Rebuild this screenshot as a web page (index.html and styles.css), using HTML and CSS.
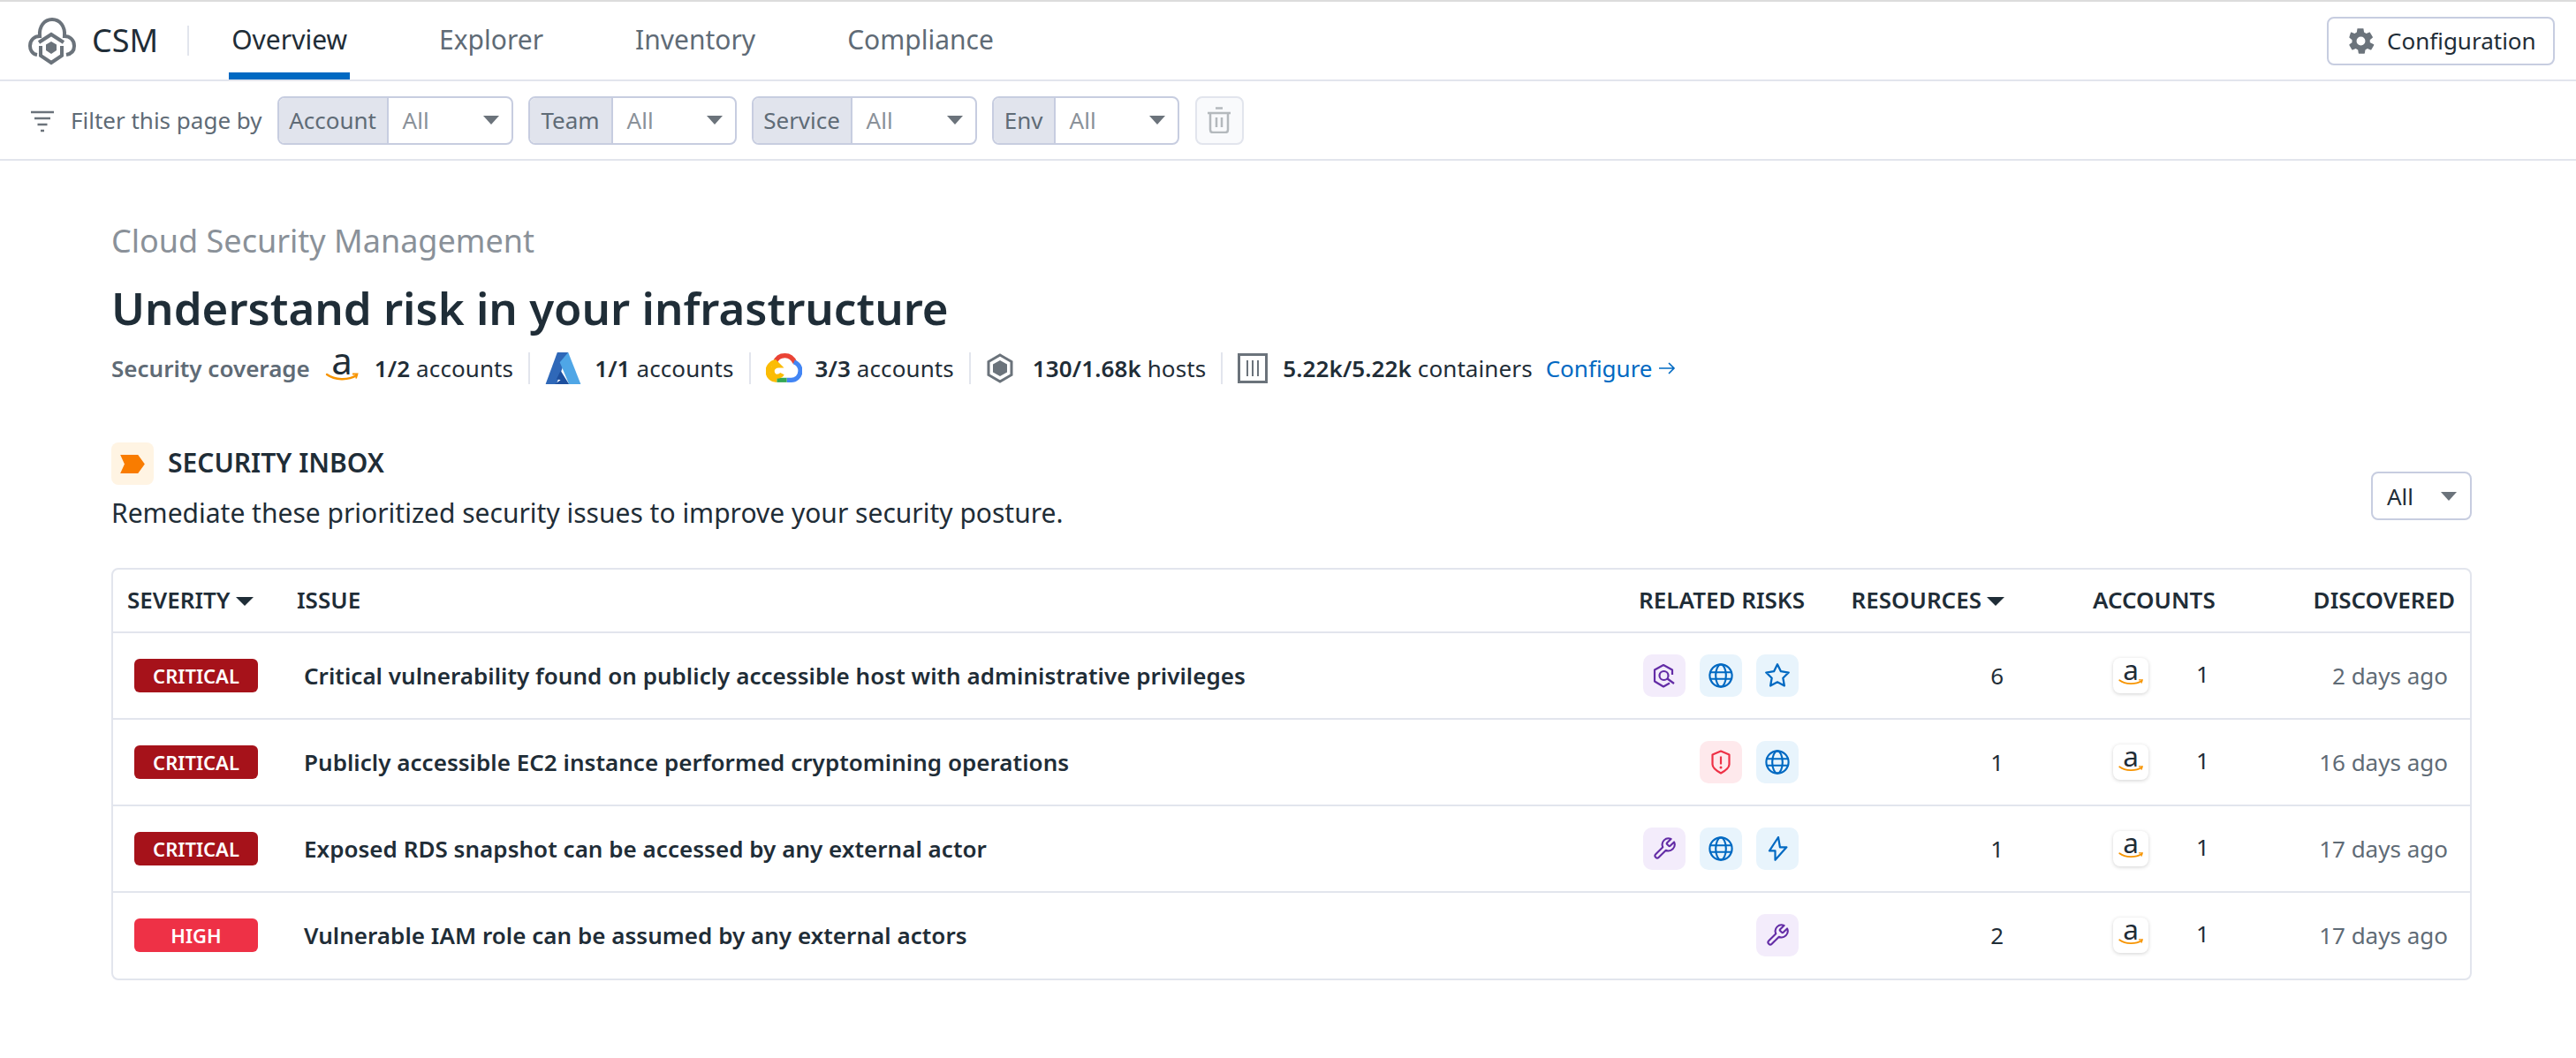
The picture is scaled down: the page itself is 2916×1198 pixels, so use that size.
FILE: index.html
```html
<!DOCTYPE html>
<html lang="en">
<head>
    <meta charset="UTF-8">
    <meta name="viewport" content="width=device-width, initial-scale=1.0">
    <title>CSM Overview</title>
    <link rel="stylesheet" href="styles.css">
</head>
<body>
    <svg class="defs" width="0" height="0">
        <symbol id="i-globe" viewBox="0 0 26 26">
            <circle cx="13" cy="13" r="11.700" fill="none" stroke="currentColor" stroke-width="2"/>
            <ellipse cx="13" cy="13" rx="5.400" ry="11.700" fill="none" stroke="currentColor" stroke-width="2"/>
            <path d="M1.500 9.500h23M1.500 16.500h23" fill="none" stroke="currentColor" stroke-width="2"/>
        </symbol>
        <symbol id="i-star" viewBox="1 1 22 22">
            <path d="M12 2l3.090 6.260L22 9.270l-5 4.870 1.180 6.880L12 17.770l-6.180 3.250L7 14.140 2 9.270l6.910-1.010z" fill="none" stroke="currentColor" stroke-width="1.800" stroke-linejoin="round"/>
        </symbol>
        <symbol id="i-bolt" viewBox="0 0 28 28">
            <path d="M15 1L5 16.300h6.500v10.500L24.400 12.300h-7.500z" fill="none" stroke="currentColor" stroke-width="2.200" stroke-linejoin="round"/>
        </symbol>
        <symbol id="i-wrench" viewBox="0 0 24 24">
            <path d="M14.700 6.300a1 1 0 0 0 0 1.400l1.600 1.600a1 1 0 0 0 1.400 0l3.770-3.770a6 6 0 0 1-7.940 7.940l-6.910 6.910a2.120 2.120 0 0 1-3-3l6.910-6.910a6 6 0 0 1 7.940-7.940l-3.760 3.760z" fill="none" stroke="currentColor" stroke-width="1.800" stroke-linejoin="round"/>
        </symbol>
        <symbol id="i-shield-search" viewBox="0 0 28 28">
            <path d="M20 22.500l-7 4-10-6V7.500l10-5.500 10 5.500v5.500" fill="none" stroke="currentColor" stroke-width="2.200" stroke-linejoin="round"/>
            <circle cx="13.500" cy="14" r="5" fill="none" stroke="currentColor" stroke-width="2.200"/>
            <path d="M17.500 17.500l7.500 5.500" fill="none" stroke="currentColor" stroke-width="2.200"/>
        </symbol>
        <symbol id="i-shield-alert" viewBox="0 0 28 28">
            <path d="M14 1.500l9.500 4v11c0 3.500-5 7.500-9.500 10-4.500-2.500-9.500-6.500-9.500-10v-11z" fill="none" stroke="currentColor" stroke-width="2.200" stroke-linejoin="round"/>
            <path d="M14 7.500v9" fill="none" stroke="currentColor" stroke-width="2.200"/>
            <circle cx="14" cy="20" r="1.500" fill="currentColor"/>
        </symbol>
        <symbol id="i-amazon" viewBox="0 0 40 32">
            <text x="20" y="23" text-anchor="middle" class="amazon-a">a</text>
            <path d="M3 23c9 6.500 24 7 33.500 1" fill="none" stroke="#f79400" stroke-width="2.400" stroke-linecap="round"/>
            <path d="M32 22.500l5.500 0-1.500 5" fill="none" stroke="#f79400" stroke-width="1.800"/>
        </symbol>
    </svg>

    <nav class="topnav">
        <svg class="logo" viewBox="0 0 56 54">
            <path d="M10 42C4 41 2 36 2 32 2 25 7 21 13 21 12 10 18 2 27 2 36 2 42 10 41 21 47 21 52 25 52 32 52 37 49 41 43 42" fill="none" stroke="#6b737b" stroke-width="4"/>
            <path d="M12 28l14-9 14 9" fill="none" stroke="#6b737b" stroke-width="4"/>
            <path d="M14 32v11l12 8 12-8V32" fill="none" stroke="#6b737b" stroke-width="4"/>
            <path d="M26 27l6 3.500v6.500l-6 4-6-4v-6.500z" fill="#6b737b"/>
        </svg>
        <span class="product">CSM</span>
        <span class="nav-sep"></span>
        <div class="tabs">
            <a class="tab active">Overview</a>
            <a class="tab">Explorer</a>
            <a class="tab">Inventory</a>
            <a class="tab">Compliance</a>
        </div>
        <button class="config-btn">
            <svg class="gear" viewBox="0 0 24 24"><path fill="#6b737b" d="M19.400 13c.1-.3.100-.7.100-1s0-.7-.1-1l2.200-1.700c.2-.2.300-.4.100-.7l-2.100-3.600c-.1-.2-.4-.3-.6-.2l-2.600 1c-.5-.4-1.100-.7-1.800-1l-.4-2.700c0-.3-.2-.4-.5-.4H9.500c-.3 0-.5.100-.5.400l-.4 2.700c-.6.300-1.200.6-1.800 1l-2.600-1c-.2-.1-.5 0-.6.200L2.500 8.600c-.2.300-.1.500.1.700L4.800 11c-.1.300-.1.700-.1 1s0 .7.100 1l-2.200 1.700c-.2.200-.3.400-.1.700l2.100 3.600c.1.200.4.300.6.200l2.600-1c.5.400 1.100.7 1.800 1l.4 2.700c0 .3.200.4.500.4h4.200c.3 0 .5-.1.500-.4l.4-2.700c.6-.3 1.200-.6 1.800-1l2.600 1c.2.100.5 0 .6-.2l2.100-3.600c.2-.3.100-.5-.1-.7zM12 15.600a3.600 3.600 0 1 1 0-7.200 3.600 3.600 0 0 1 0 7.200z"/></svg>
            Configuration
        </button>
    </nav>

    <div class="filterbar">
        <svg class="filter-icon" viewBox="0 0 28 28">
            <path d="M1 5h26M5 12h18M8.500 19h11M12 26h4" fill="none" stroke="#6b737b" stroke-width="2.500"/>
        </svg>
        <span class="filter-label">Filter this page by</span>
        <div class="pill pill-account"><span class="pill-name">Account</span><span class="pill-value">All<i class="caret"></i></span></div>
        <div class="pill pill-team"><span class="pill-name">Team</span><span class="pill-value">All<i class="caret"></i></span></div>
        <div class="pill pill-service"><span class="pill-name">Service</span><span class="pill-value">All<i class="caret"></i></span></div>
        <div class="pill pill-env"><span class="pill-name">Env</span><span class="pill-value">All<i class="caret"></i></span></div>
        <button class="trash-btn">
            <svg viewBox="0 0 28 30"><path d="M10 1.500h8M1 7h26M4 7v19c0 2 1 3 3 3h14c2 0 3-1 3-3V7M11 12v11M17 12v11" fill="none" stroke="#b4b9bd" stroke-width="2.500"/></svg>
        </button>
    </div>

    <main class="content">
        <div class="eyebrow">Cloud Security Management</div>
        <h1>Understand risk in your infrastructure</h1>

        <div class="coverage">
            <span class="coverage-title">Security coverage</span>
            <div class="cov-item">
                <svg class="cov-icon amazon"><use href="#i-amazon"/></svg>
                <span><b>1/2</b> accounts</span>
            </div>
            <div class="cov-item tight">
                <svg class="cov-icon" viewBox="0 0 42 38">
                    <path d="M14 0h13L13 38H0z" fill="#2f68b8"/>
                    <path d="M27 0l15 38H28L17 12z" fill="#4fa6e6"/>
                    <path d="M18 22l10 16H11l7-5-5-1z" fill="#1d4f9e"/>
                </svg>
                <span><b>1/1</b> accounts</span>
            </div>
            <div class="cov-item tight">
                <svg class="cov-icon" viewBox="0 0 40 32">
                    <path d="M10 10C12 4 17 2 21 2c5 0 9 3 11 8" fill="none" stroke="#ea4335" stroke-width="5"/>
                    <path d="M31 9c5 2 7 6 7 10 0 6-5 10-10 10h-5" fill="none" stroke="#4285f4" stroke-width="5"/>
                    <path d="M23 29h-11" fill="none" stroke="#34a853" stroke-width="5"/>
                    <path d="M12 29c-6 0-10-4-10-10 0-5 4-9 8-10l4 4c-4 0-7 3-7 6 0 4 3 6 5 6 3 0 5-1 6-3" fill="none" stroke="#fbbc05" stroke-width="5"/>
                </svg>
                <span><b>3/3</b> accounts</span>
            </div>
            <div class="cov-item wide">
                <svg class="cov-icon hex" viewBox="0 0 32 34">
                    <path d="M16 2l13 7.500v15L16 32 3 24.500v-15z" fill="none" stroke="#6b737b" stroke-width="3"/>
                    <path d="M16 8l8 4.500v9L16 26l-8-4.500v-9z" fill="#6b737b"/>
                </svg>
                <span><b>130/1.68k</b> hosts</span>
            </div>
            <div class="cov-item last">
                <svg class="cov-icon box" viewBox="0 0 34 34">
                    <rect x="1.500" y="1.500" width="31" height="31" fill="none" stroke="#6b737b" stroke-width="3"/>
                    <path d="M11 8v18M17 8v18M23 8v18" fill="none" stroke="#6b737b" stroke-width="2"/>
                </svg>
                <span><b>5.22k/5.22k</b> containers</span>
            </div>
            <a class="configure">Configure
                <svg class="arrow" viewBox="0 0 20 20"><path d="M1 10h17M12 4l6 6-6 6" fill="none" stroke="#0069c2" stroke-width="1.600"/></svg>
            </a>
        </div>

        <section class="inbox-head">
            <div>
                <div class="inbox-title">
                    <span class="inbox-icon"><svg viewBox="0 0 30 22"><path d="M0 0h21l8 11-8 11H0l5-11z" fill="#f97c00"/></svg></span>
                    <h2>SECURITY INBOX</h2>
                </div>
                <p class="inbox-sub">Remediate these prioritized security issues to improve your security posture.</p>
            </div>
            <div class="select-all">All<i class="caret"></i></div>
        </section>

        <div class="table-wrap">
            <table class="issues">
                <thead>
                    <tr>
                        <th class="col-sev">SEVERITY<i class="caret dark"></i></th>
                        <th class="col-issue">ISSUE</th>
                        <th class="col-risks">RELATED RISKS</th>
                        <th class="col-res">RESOURCES<i class="caret dark"></i></th>
                        <th class="col-acc">ACCOUNTS</th>
                        <th class="col-disc">DISCOVERED</th>
                    </tr>
                </thead>
                <tbody>
                    <tr>
                        <td class="col-sev"><span class="badge critical">CRITICAL</span></td>
                        <td class="col-issue">Critical vulnerability found on publicly accessible host with administrative privileges</td>
                        <td class="col-risks"><div class="chips">
                            <span class="chip purple"><svg><use href="#i-shield-search"/></svg></span>
                            <span class="chip blue"><svg><use href="#i-globe"/></svg></span>
                            <span class="chip blue"><svg><use href="#i-star"/></svg></span>
                        </div></td>
                        <td class="col-res">6</td>
                        <td class="col-acc"><div class="acc"><span class="aws"><svg><use href="#i-amazon"/></svg></span><span class="acc-num">1</span></div></td>
                        <td class="col-disc">2 days ago</td>
                    </tr>
                    <tr>
                        <td class="col-sev"><span class="badge critical">CRITICAL</span></td>
                        <td class="col-issue">Publicly accessible EC2 instance performed cryptomining operations</td>
                        <td class="col-risks"><div class="chips">
                            <span class="chip red"><svg><use href="#i-shield-alert"/></svg></span>
                            <span class="chip blue"><svg><use href="#i-globe"/></svg></span>
                        </div></td>
                        <td class="col-res">1</td>
                        <td class="col-acc"><div class="acc"><span class="aws"><svg><use href="#i-amazon"/></svg></span><span class="acc-num">1</span></div></td>
                        <td class="col-disc">16 days ago</td>
                    </tr>
                    <tr>
                        <td class="col-sev"><span class="badge critical">CRITICAL</span></td>
                        <td class="col-issue">Exposed RDS snapshot can be accessed by any external actor</td>
                        <td class="col-risks"><div class="chips">
                            <span class="chip purple"><svg><use href="#i-wrench"/></svg></span>
                            <span class="chip blue"><svg><use href="#i-globe"/></svg></span>
                            <span class="chip blue"><svg><use href="#i-bolt"/></svg></span>
                        </div></td>
                        <td class="col-res">1</td>
                        <td class="col-acc"><div class="acc"><span class="aws"><svg><use href="#i-amazon"/></svg></span><span class="acc-num">1</span></div></td>
                        <td class="col-disc">17 days ago</td>
                    </tr>
                    <tr>
                        <td class="col-sev"><span class="badge high">HIGH</span></td>
                        <td class="col-issue">Vulnerable IAM role can be assumed by any external actors</td>
                        <td class="col-risks"><div class="chips">
                            <span class="chip purple"><svg><use href="#i-wrench"/></svg></span>
                        </div></td>
                        <td class="col-res">2</td>
                        <td class="col-acc"><div class="acc"><span class="aws"><svg><use href="#i-amazon"/></svg></span><span class="acc-num">1</span></div></td>
                        <td class="col-disc">17 days ago</td>
                    </tr>
                </tbody>
            </table>
        </div>
    </main>
</body>
</html>
```

FILE: styles.css
```css
* {
    box-sizing: border-box;
}
body {
    font-family: "Noto Sans", sans-serif;
    font-size: 26px;
    color: #1f2d37;
    background-color: #fff;
    margin: 0;
    padding: 0;
    border-top: 2px solid #dcdcdc;
}
.defs {
    display: none;
}
.amazon-a {
    font-family: "Noto Sans", sans-serif;
    font-size: 42px;
    fill: #1f2d37;
}

/* top nav */
.topnav {
    display: flex;
    align-items: center;
    height: 90px;
    padding: 0 24px 0 32px;
    border-bottom: 2px solid #e2e5ed;
}
.logo {
    width: 56px;
    height: 54px;
    margin-top: 2px;
}
.product {
    font-size: 36px;
    margin-left: 16px;
    line-height: 1;
}
.nav-sep {
    width: 2px;
    height: 34px;
    background: #e2e5ed;
    margin: 0 45px 0 33px;
}
.tabs {
    display: flex;
    gap: 98px;
    height: 88px;
}
.tab {
    font-size: 30px;
    color: #5f6b76;
    line-height: 86px;
    padding: 0 3px;
    height: 88px;
}
.tab.active {
    color: #1f2d37;
    border-bottom: 8px solid #0069c2;
}
.config-btn {
    display: flex;
    align-items: center;
    gap: 13px;
    margin-left: auto;
    height: 55px;
    width: 258px;
    padding: 0 0 0 20px;
    font-family: inherit;
    font-size: 26px;
    color: #1f2d37;
    background: #fff;
    border: 2px solid #c7cde0;
    border-radius: 8px;
}
.gear {
    width: 33px;
    height: 33px;
}

/* filter bar */
.filterbar {
    display: flex;
    align-items: center;
    height: 90px;
    padding: 0 0 0 34px;
    border-bottom: 2px solid #e2e5ed;
}
.filter-icon {
    width: 28px;
    height: 28px;
}
.filter-label {
    color: #5f6b76;
    margin-left: 18px;
    margin-right: 17px;
}
.pill {
    display: flex;
    height: 55px;
    border: 2px solid #c7cde0;
    border-radius: 8px;
    margin-right: 17px;
    overflow: hidden;
}
.pill-name {
    display: flex;
    align-items: center;
    justify-content: center;
    background: #e1e4ed;
    color: #5f6b76;
    border-right: 2px solid #c7cde0;
}
.pill-value {
    display: flex;
    align-items: center;
    justify-content: space-between;
    padding: 0 14px 0 16px;
    color: #8a9199;
    flex: 1;
}
.pill-account { width: 267px; }
.pill-account .pill-name { width: 124px; }
.pill-team { width: 236px; }
.pill-team .pill-name { width: 94px; }
.pill-service { width: 255px; }
.pill-service .pill-name { width: 112px; }
.pill-env { width: 212px; margin-right: 18px; }
.pill-env .pill-name { width: 70px; }
.caret {
    display: inline-block;
    width: 0;
    height: 0;
    border-left: 9px solid transparent;
    border-right: 9px solid transparent;
    border-top: 10px solid #6b737b;
}
.caret.dark {
    border-left-width: 10px;
    border-right-width: 10px;
    border-top-color: #1f2d37;
    margin-left: 6px;
    vertical-align: 3px;
}
.trash-btn {
    width: 55px;
    height: 55px;
    padding: 0;
    background: #f9fafc;
    border: 2px solid #e2e5ed;
    border-radius: 8px;
}
.trash-btn svg {
    width: 28px;
    height: 30px;
    vertical-align: middle;
}

/* header area */
.content {
    padding: 67px 118px 0 126px;
}
.eyebrow {
    font-size: 36px;
    line-height: 48px;
    color: #8a9199;
}
h1 {
    font-size: 51px;
    font-weight: 600;
    line-height: 72px;
    margin: 15px 0 15px;
}
.coverage {
    display: flex;
    align-items: center;
    height: 36px;
}
.coverage-title {
    font-weight: 600;
    color: #5f6b76;
    margin-right: 16px;
}
.cov-item {
    display: flex;
    align-items: center;
    gap: 17px;
    height: 36px;
    padding-right: 17px;
    margin-right: 17px;
    border-right: 2px solid #e2e5ed;
    letter-spacing: 0.1px;
}
.cov-item.tight {
    gap: 15px;
}
.cov-item.wide {
    gap: 21px;
}
.cov-item.last {
    border-right: 0;
    margin-right: 0;
    padding-right: 15px;
}
.cov-item b {
    font-weight: 600;
}
.cov-icon {
    width: 41px;
    height: 36px;
}
.cov-icon.amazon {
    width: 40px;
}
.cov-icon.hex {
    width: 32px;
}
.cov-icon.box {
    width: 34px;
}
.configure {
    color: #0069c2;
    display: flex;
    align-items: center;
    gap: 6px;
}
.arrow {
    width: 20px;
    height: 20px;
}

/* inbox */
.inbox-head {
    display: flex;
    justify-content: space-between;
    align-items: flex-end;
    margin-top: 66px;
}
.inbox-title {
    display: flex;
    align-items: center;
    gap: 16px;
}
.inbox-icon {
    display: flex;
    align-items: center;
    justify-content: center;
    width: 48px;
    height: 48px;
    background: #fff4e3;
    border-radius: 8px;
}
.inbox-icon svg {
    width: 29px;
    height: 21px;
}
h2 {
    font-size: 30px;
    font-weight: 600;
    margin: -3px 0 0;
}
.inbox-sub {
    font-size: 30px;
    line-height: 40px;
    margin: 12px 0 0;
}
.select-all {
    display: flex;
    align-items: center;
    justify-content: space-between;
    width: 114px;
    height: 55px;
    padding: 0 15px 0 16px;
    margin-bottom: 12px;
    border: 2px solid #c7cde0;
    border-radius: 8px;
}
.table-wrap {
    margin-top: 42px;
    border: 2px solid #e2e5ed;
    border-radius: 8px;
}
.issues {
    width: 100%;
    table-layout: fixed;
    border-collapse: collapse;
}
.issues th {
    height: 71px;
    padding-bottom: 3px;
    font-weight: 600;
    text-align: left;
    border-bottom: 2px solid #e2e5ed;
}
.issues td {
    height: 98px;
    border-bottom: 2px solid #e2e5ed;
}
.issues tr:last-child td {
    border-bottom: 0;
    padding-bottom: 3px;
}
.col-sev { width: 198px; }
.col-risks { width: 210px; }
.col-res { width: 230px; }
.col-acc { width: 275px; }
.col-disc { width: 237px; }
th.col-sev { padding-left: 16px; }
td.col-sev { padding-left: 24px; }
th.col-issue { padding-left: 10px; }
td.col-issue {
    padding-left: 18px;
    font-weight: 600;
    letter-spacing: 0.03px;
}
th.col-risks { text-align: right; padding-right: 11px; }
th.col-res { text-align: right; padding-right: 15px; }
td.col-res { text-align: right; padding-right: 16px; }
th.col-acc { padding-left: 85px; }
th.col-disc { text-align: right; padding-right: 17px; }
td.col-disc {
    text-align: right;
    padding-right: 25px;
    color: #5f6b76;
}
.badge {
    display: flex;
    align-items: center;
    justify-content: center;
    width: 140px;
    height: 38px;
    font-size: 22px;
    font-weight: 600;
    color: #fff;
    border-radius: 6px;
}
.badge.critical {
    background: #a6121a;
}
.badge.high {
    background: #ee3146;
}
.chips {
    display: flex;
    justify-content: flex-end;
    gap: 16px;
    padding-right: 17px;
}
.chip {
    display: flex;
    align-items: center;
    justify-content: center;
    width: 48px;
    height: 48px;
    border-radius: 10px;
}
.chip svg {
    width: 28px;
    height: 28px;
}
.chip.purple {
    background: #f3ecfb;
    color: #632ca6;
}
.chip.blue {
    background: #e8f4fc;
    color: #0069c2;
}
.chip.red {
    background: #fee9ec;
    color: #ee3146;
}
.acc {
    display: flex;
    align-items: center;
    padding-left: 107px;
}
.aws {
    display: flex;
    align-items: center;
    justify-content: center;
    width: 40px;
    height: 40px;
    background: #fff;
    border-radius: 8px;
    box-shadow: 0 1px 4px rgba(0, 0, 0, 0.18);
}
.aws svg {
    width: 30px;
    height: 26px;
}
.acc-num {
    margin-left: 54px;
    margin-top: -4px;
}
```
